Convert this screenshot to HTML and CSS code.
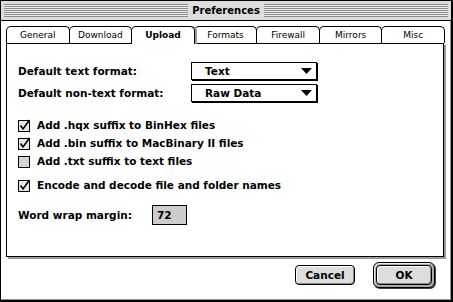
FILE: index.html
```html
<!DOCTYPE html>
<html lang="en">
<head>
  <meta charset="UTF-8">
  <title>Preferences</title>
  <link rel="stylesheet" href="styles.css">
</head>
<body>
  <div class="window">
    <div class="titlebar">
      <span class="stripes"></span>
      <span class="title">Preferences</span>
      <span class="stripes"></span>
    </div>

    <div class="dialog">
      <div class="tabs">
        <div class="tab">General</div>
        <div class="tab">Download</div>
        <div class="tab active">Upload</div>
        <div class="tab">Formats</div>
        <div class="tab">Firewall</div>
        <div class="tab">Mirrors</div>
        <div class="tab">Misc</div>
      </div>

      <div class="panel">
        <div class="form-row">
          <span class="label">Default text format:</span>
          <div class="popup">
            <span>Text</span>
            <svg class="arrow" width="11" height="6" viewBox="0 0 11 6"><polygon points="0,0 11,0 5.5,6" fill="#000"/></svg>
          </div>
        </div>
        <div class="form-row">
          <span class="label">Default non-text format:</span>
          <div class="popup">
            <span>Raw Data</span>
            <svg class="arrow" width="11" height="6" viewBox="0 0 11 6"><polygon points="0,0 11,0 5.5,6" fill="#000"/></svg>
          </div>
        </div>

        <div class="checks">
          <label class="check">
            <svg class="box" width="13" height="13" viewBox="0 0 13 13">
              <rect x="0.5" y="1.5" width="11" height="11" fill="#e6e6e6" stroke="#000"/>
              <path d="M2.5 6.5 L5 10 L11.5 1" fill="none" stroke="#000" stroke-width="1.6"/>
            </svg>
            Add .hqx suffix to BinHex files
          </label>
          <label class="check">
            <svg class="box" width="13" height="13" viewBox="0 0 13 13">
              <rect x="0.5" y="1.5" width="11" height="11" fill="#e6e6e6" stroke="#000"/>
              <path d="M2.5 6.5 L5 10 L11.5 1" fill="none" stroke="#000" stroke-width="1.6"/>
            </svg>
            Add .bin suffix to MacBinary II files
          </label>
          <label class="check">
            <svg class="box" width="13" height="13" viewBox="0 0 13 13">
              <rect x="0.5" y="1.5" width="11" height="11" fill="#d6d6d6" stroke="#000"/>
            </svg>
            Add .txt suffix to text files
          </label>
          <label class="check encode">
            <svg class="box" width="13" height="13" viewBox="0 0 13 13">
              <rect x="0.5" y="1.5" width="11" height="11" fill="#e6e6e6" stroke="#000"/>
              <path d="M2.5 6.5 L5 10 L11.5 1" fill="none" stroke="#000" stroke-width="1.6"/>
            </svg>
            Encode and decode file and folder names
          </label>
        </div>

        <div class="wrap-row">
          <span class="wrap-label">Word wrap margin:</span>
          <div class="field">72</div>
        </div>
      </div>

      <div class="buttons">
        <button class="btn">Cancel</button>
        <div class="default-ring">
          <button class="btn ok">OK</button>
        </div>
      </div>
    </div>
  </div>
</body>
</html>
```

FILE: styles.css
```css
body {
  margin: 0;
  padding: 0;
  background-color: #ffffff;
  font-family: 'DejaVu Sans', sans-serif;
  color: #000;
}

.window {
  width: 453px;
  height: 302px;
  box-sizing: border-box;
  border: 1px solid #000;
  border-right-width: 2px;
  border-bottom-width: 2px;
  box-shadow: inset -1px -1px 0 #999;
  background-color: #ffffff;
}

.titlebar {
  height: 20px;
  box-sizing: border-box;
  display: flex;
  align-items: center;
  gap: 4px;
  padding: 0 3px;
  background-color: #dddddd;
  border-bottom: 1px solid #000;
}

.stripes {
  flex: 1;
  height: 13px;
  background: repeating-linear-gradient(#8a8a8a 0, #8a8a8a 1px, #eeeeee 1px, #eeeeee 2px);
}

.title {
  font-weight: bold;
  font-size: 10px;
}

.dialog {
  padding: 5px 5px 0 5px;
}

.tabs {
  display: flex;
  height: 17px;
  margin-right: 2px;
}

.tab {
  flex: 1;
  box-sizing: border-box;
  border: 1px solid #000;
  border-bottom: none;
  border-radius: 5px 5px 0 0;
  font-size: 9px;
  text-align: center;
  line-height: 16px;
  margin-right: -1px;
}

.tab.active {
  font-weight: bold;
  position: relative;
  z-index: 1;
  height: 18px;
  box-shadow: 2px 0 0 #999;
  background-color: #fff;
}

.panel {
  height: 214px;
  box-sizing: border-box;
  border: 1px solid #000;
  box-shadow: 2px 2px 0 #999;
  margin-right: 2px;
  padding: 18px 0 0 11px;
  font-size: 10.5px;
  font-weight: bold;
}

.form-row {
  display: flex;
  align-items: center;
  margin-bottom: 4px;
}

.label {
  width: 173px;
}

.popup {
  width: 126px;
  height: 18px;
  box-sizing: border-box;
  border: 1px solid #000;
  box-shadow: 1px 1px 0 #000;
  display: flex;
  align-items: center;
  justify-content: space-between;
  padding: 0 4px 0 13px;
}

.checks {
  margin-top: 14px;
}

.check {
  display: flex;
  align-items: center;
  gap: 6px;
  height: 18px;
}

.check.encode {
  margin-top: 6px;
}

.wrap-row {
  display: flex;
  align-items: center;
  margin-top: 11px;
}

.wrap-label {
  width: 134px;
}

.field {
  width: 35px;
  height: 20px;
  box-sizing: border-box;
  border: 1px solid #000;
  background-color: #cccccc;
  padding-left: 4px;
  line-height: 18px;
}

.buttons {
  display: flex;
  justify-content: flex-end;
  align-items: center;
  gap: 18px;
  margin-top: 5px;
  padding-right: 11px;
}

.btn {
  font-family: 'DejaVu Sans', sans-serif;
  font-weight: bold;
  font-size: 10.5px;
  height: 20px;
  width: 60px;
  border: 1px solid #000;
  border-radius: 4px;
  background-color: #dddddd;
  box-shadow: inset 1px 1px 0 #fff, inset -1px -1px 0 #888;
  padding: 0;
  color: #000;
}

.default-ring {
  border: 1px solid #000;
  border-radius: 6px;
  padding: 2px;
  background-color: #aaaaaa;
  box-shadow: inset 1px 1px 0 #eee, 1px 1px 0 #444;
}

.btn.ok {
  width: 56px;
  display: block;
}
```
